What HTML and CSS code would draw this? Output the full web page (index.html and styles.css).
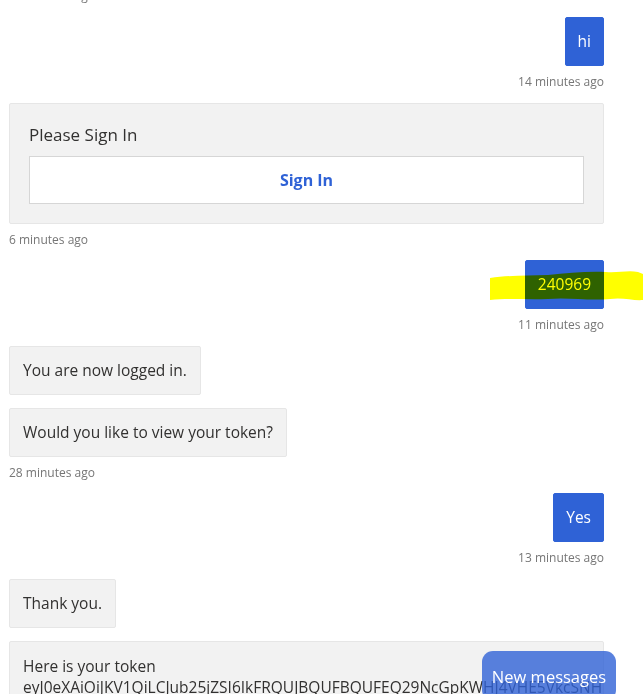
FILE: index.html
```html
<!DOCTYPE html>
<html lang="en">

<head>
  <meta charset="utf-8">
  <title>Chat</title>
  <link rel="stylesheet" href="styles.css">
</head>

<body>
  <div class="transcript">
    <div class="time">16 minutes ago</div>

    <!-- user: hi -->
    <div class="group user">
      <div class="bubble">hi</div>
      <div class="time">14 minutes ago</div>
    </div>

    <!-- bot: sign in card -->
    <div class="group bot">
      <div class="card">
        <div class="card-title">Please Sign In</div>
        <button class="card-button">Sign In</button>
      </div>
      <div class="time">6 minutes ago</div>
    </div>

    <!-- user: code -->
    <div class="group user">
      <div class="bubble">240969</div>
      <div class="time">11 minutes ago</div>
      <svg class="marker" width="156" height="40" viewBox="0 0 156 40">
        <path d="M2 12 C20 9 40 10 60 9 C80 7 100 5 118 6 C130 7 140 4 150 6 L155 8 L155 34 C145 35 135 31 122 33 C100 35 80 31 60 33 C40 34 20 32 2 34 Z" fill="#ffff00" />
      </svg>
    </div>

    <!-- bot: logged in -->
    <div class="group bot">
      <div class="bubble">You are now logged in.</div>
      <div class="bubble">Would you like to view your token?</div>
      <div class="time">28 minutes ago</div>
    </div>

    <!-- user: yes -->
    <div class="group user">
      <div class="bubble">Yes</div>
      <div class="time">13 minutes ago</div>
    </div>

    <!-- bot: token -->
    <div class="group bot">
      <div class="bubble">Thank you.</div>
      <div class="bubble wide">Here is your token<br>eyJ0eXAiOiJKV1QiLCJub25jZSI6IkFRQUJBQUFBQUFEQ29NcGpKWHJ4VHE5VkcSNHJ3aWtEZXhMQWRqVmxFaFZ</div>
    </div>
  </div>

  <button class="new-messages">New messages</button>
</body>

</html>
```

FILE: styles.css
```css
body {
  margin: 0;
  height: 694px;
  overflow: hidden;
  background: #fff;
  font-family: "Open Sans", "Noto Sans", sans-serif;
  font-size: 15.5px;
  color: #323130;
}

.transcript {
  display: flex;
  flex-direction: column;
  padding: 0 40px 0 9px;
  margin-top: -12px;
}

.group {
  position: relative;
  display: flex;
  flex-direction: column;
  gap: 13px;
  margin-bottom: 12.5px;
}

.user {
  align-items: flex-end;
}

.bot {
  align-items: flex-start;
}

.time {
  margin-top: -5px;
  font-size: 12px;
  line-height: 16px;
  color: #767676;
}

.transcript > .time {
  margin: 0 0 13px;
}

.bubble {
  padding: 14px 13px;
  line-height: 19px;
  background: #f2f2f2;
  border: 1px solid #e6e6e6;
  border-radius: 2px;
}

.user .bubble {
  color: #fff;
  background: #2f62d6;
  border-color: #2f62d6;
  padding: 14px 12px;
}

.bubble.wide {
  align-self: stretch;
  overflow: hidden;
  white-space: nowrap;
  padding-top: 14px;
  line-height: 21px;
}

.card {
  align-self: stretch;
  padding: 19px;
  background: #f2f2f2;
  border: 1px solid #e6e6e6;
  border-radius: 2px;
}

.card-title {
  font-size: 17px;
  line-height: 24px;
  margin-bottom: 9px;
}

.card-button {
  display: block;
  width: 100%;
  height: 48px;
  font-family: inherit;
  font-size: 16px;
  font-weight: bold;
  color: #2f62d6;
  background: #fff;
  border: 1px solid #d6d6d6;
  cursor: pointer;
}

.marker {
  position: absolute;
  right: -40px;
  top: 6px;
  mix-blend-mode: multiply;
}

.new-messages {
  position: absolute;
  left: 482px;
  top: 651px;
  width: 134px;
  height: 50px;
  padding: 0;
  font-family: inherit;
  font-size: 16.5px;
  color: #fff;
  background: rgba(47, 98, 214, 0.8);
  border: none;
  border-radius: 11px;
}
```
